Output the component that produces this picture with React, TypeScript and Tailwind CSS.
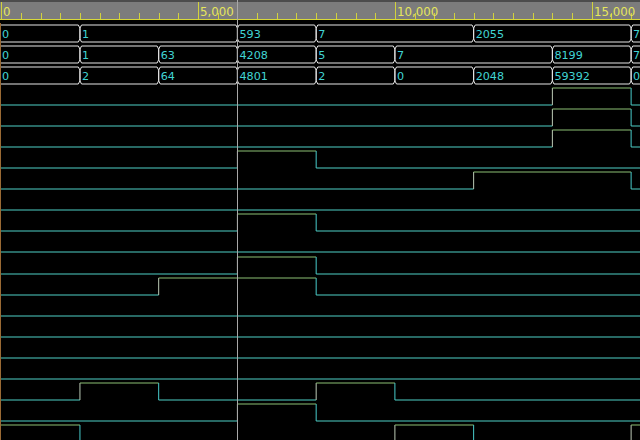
const X0 = 1.2
const SCALE = 0.03937
const W = 640
const HI = 1
const LO = 18
const FONT = '"DejaVu Sans", "Liberation Sans", sans-serif'

const px = (t: number) => X0 + t * SCALE

type Bus = { t: number; v: string }[]
type Bit = [number, 0 | 1][]

const buses: Bus[] = [
  [
    { t: 0, v: '0' }, { t: 2000, v: '1' }, { t: 6000, v: '593' },
    { t: 8000, v: '7' }, { t: 12000, v: '2055' }, { t: 16000, v: '7' },
  ],
  [
    { t: 0, v: '0' }, { t: 2000, v: '1' }, { t: 4000, v: '63' }, { t: 6000, v: '4208' },
    { t: 8000, v: '5' }, { t: 10000, v: '7' }, { t: 14000, v: '8199' }, { t: 16000, v: '7' },
  ],
  [
    { t: 0, v: '0' }, { t: 2000, v: '2' }, { t: 4000, v: '64' }, { t: 6000, v: '4801' },
    { t: 8000, v: '2' }, { t: 10000, v: '0' }, { t: 12000, v: '2048' }, { t: 14000, v: '59392' },
    { t: 16000, v: '0' },
  ],
]

const bits: Bit[] = [
  [[0, 0], [14000, 1], [16000, 0]],
  [[0, 0], [14000, 1], [16000, 0]],
  [[0, 0], [14000, 1], [16000, 0]],
  [[0, 0], [6000, 1], [8000, 0]],
  [[0, 0], [12000, 1], [16000, 0]],
  [[0, 0]],
  [[0, 0], [6000, 1], [8000, 0]],
  [[0, 0]],
  [[0, 0], [6000, 1], [8000, 0]],
  [[0, 0], [4000, 1], [8000, 0]],
  [[0, 0]],
  [[0, 0]],
  [[0, 0]],
  [[0, 0]],
  [[0, 0], [2000, 1], [4000, 0], [8000, 1], [10000, 0]],
  [[0, 0], [6000, 1], [8000, 0]],
  [[0, 1], [2000, 0], [10000, 1], [12000, 0], [16000, 1]],
]

function Ruler() {
  const ticks = []
  for (let t = 0; t <= 16000; t += 500) ticks.push(t)

  return (
    <div className="h-[23.5px] shrink-0 bg-black">
      <div className="h-[2px] bg-[#4c4c4c]" />
      <svg width={W} height={18} className="block bg-[#7c7c7c]">
        {ticks.map(t => {
          const major = t % 5000 === 0
          const x = Math.round(px(t)) + 0.5
          return (
            <line
              key={t}
              x1={x}
              x2={x}
              y1={major ? 0 : 11}
              y2={17}
              stroke="#d2d23c"
              strokeWidth={1}
            />
          )
        })}
        {[0, 5000, 10000, 15000].map(t => (
          <text
            key={t}
            x={Math.round(px(t)) + 2}
            y={13.5}
            fontSize={11.8}
            fill="#e6e65c"
            fontFamily={FONT}
          >
            {t.toLocaleString('en-US')}
          </text>
        ))}
        <line x1={0} x2={W} y1={17.5} y2={17.5} stroke="#d8d83a" />
      </svg>
    </div>
  )
}

function BusRow({ bus }: { bus: Bus }) {
  const d = 1.6
  const mid = (HI + LO) / 2
  return (
    <div className="h-[21.1px] shrink-0">
      <svg width={W} height={21} className="block overflow-visible">
        {bus.map((seg, i) => {
          const xs = i === 0 ? -4 : px(seg.t)
          const xe = i === bus.length - 1 ? W + 4 : px(bus[i + 1].t)
          const path = `M${xs + d},${HI} L${xe - d},${HI} L${xe},${HI + 2 * d} L${xe},${LO - 2 * d} L${xe - d},${LO} L${xs + d},${LO} L${xs},${LO - 2 * d} L${xs},${HI + 2 * d} Z`
          return (
            <g key={i}>
              <path d={path} fill="none" stroke="#e6e6e6" strokeWidth={1} />
              <text
                x={Math.max(xs, 0) + 2}
                y={mid + 4.2}
                fontSize={11.2}
                fill="#40d4d4"
                fontFamily={FONT}
              >
                {seg.v}
              </text>
            </g>
          )
        })}
      </svg>
    </div>
  )
}

function BitRow({ bit }: { bit: Bit }) {
  const y = (v: number) => (v ? HI : LO)
  return (
    <div className="h-[21.1px] shrink-0">
      <svg width={W} height={21} className="block overflow-visible">
        {bit.map(([t, v], i) => {
          const xs = px(t)
          const xe = i === bit.length - 1 ? W : px(bit[i + 1][0])
          return (
            <g key={i}>
              {i > 0 && (
                <line
                  x1={xs}
                  x2={xs}
                  y1={HI}
                  y2={LO}
                  stroke={v ? '#bccab6' : '#48cccc'}
                />
              )}
              <line
                x1={i === 0 ? 0 : xs}
                x2={xe}
                y1={y(v)}
                y2={y(v)}
                stroke={v ? '#8cc074' : '#4ed0c6'}
              />
            </g>
          )
        })}
      </svg>
    </div>
  )
}

export default function App() {
  return (
    <div className="relative flex h-[440px] w-[640px] flex-col overflow-hidden bg-black">
      <Ruler />
      {buses.map((b, i) => (
        <BusRow key={i} bus={b} />
      ))}
      {bits.map((b, i) => (
        <BitRow key={i} bit={b} />
      ))}
      <div className="absolute top-[23px] bottom-0 left-0 w-px bg-[#9a6a34]" />
      <div className="absolute top-0 bottom-0 left-[237px] w-px bg-[#a8a8a8]" />
    </div>
  )
}
